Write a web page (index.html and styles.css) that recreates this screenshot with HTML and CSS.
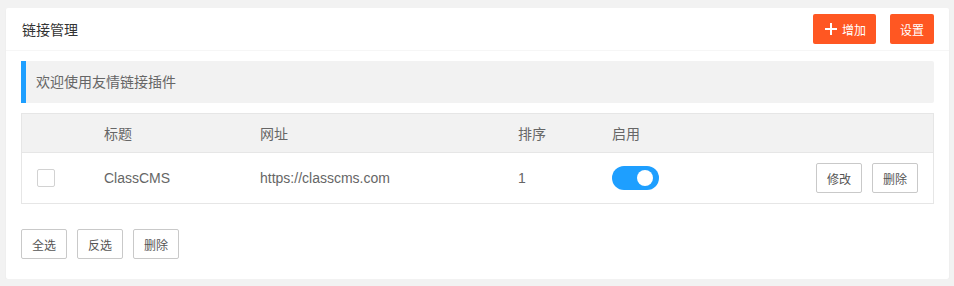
FILE: index.html
```html
<!DOCTYPE html>
<html lang="zh-CN">
<head>
    <meta charset="UTF-8">
    <title>链接管理</title>
    <link rel="stylesheet" href="styles.css">
</head>
<body>

<div class="card">
    <!-- Card header -->
    <div class="card-header">
        <span class="card-title">链接管理</span>
        <div class="header-actions">
            <button class="btn btn-warm">
                <svg class="icon-add" width="12" height="12" viewBox="0 0 12 12"><path d="M6 0v12M0 6h12" stroke="#fff" stroke-width="2"/></svg>增加
            </button>
            <button class="btn btn-warm">设置</button>
        </div>
    </div>

    <div class="card-body">
        <div class="quote">欢迎使用友情链接插件</div>

        <table class="link-table">
            <thead>
                <tr>
                    <th class="col-check"></th>
                    <th class="col-title">标题</th>
                    <th class="col-url">网址</th>
                    <th class="col-sort">排序</th>
                    <th class="col-state">启用</th>
                    <th></th>
                </tr>
            </thead>
            <tbody>
                <tr>
                    <td><span class="checkbox"></span></td>
                    <td>ClassCMS</td>
                    <td>https://classcms.com</td>
                    <td>1</td>
                    <td><span class="switch on"><i></i></span></td>
                    <td class="col-actions">
                        <button class="btn btn-plain">修改</button>
                        <button class="btn btn-plain">删除</button>
                    </td>
                </tr>
            </tbody>
        </table>

        <div class="bulk-actions">
            <button class="btn btn-plain">全选</button>
            <button class="btn btn-plain">反选</button>
            <button class="btn btn-plain">删除</button>
        </div>
    </div>
</div>

</body>
</html>
```

FILE: styles.css
```css
/* General page styling */
body {
    font-family: "Liberation Sans", Arial, "Noto Sans CJK SC", sans-serif;
    font-size: 14px;
    color: #666;
    margin: 0;
    padding: 8px 5px 0 6px;
    background-color: #f2f2f2;
}

.card {
    background-color: #fff;
    border-radius: 2px;
    box-shadow: 0 1px 2px rgba(0, 0, 0, 0.05);
}

.card-header {
    height: 42px;
    border-bottom: 1px solid #f6f6f6;
    padding: 0 15px 0 16px;
    display: flex;
    align-items: center;
    justify-content: space-between;
}

.card-title {
    color: #333;
    font-size: 14px;
}

.header-actions {
    display: flex;
    gap: 14px;
}

.card-body {
    padding: 10px 15px 20px 15px;
}

/* Buttons */
.btn {
    height: 30px;
    padding: 0 10px;
    font-family: inherit;
    font-size: 12px;
    border-radius: 2px;
    cursor: pointer;
    display: inline-flex;
    align-items: center;
}

.btn-warm {
    background-color: #ff5722;
    color: #fff;
    border: none;
}

.icon-add {
    margin: 0 5px 0 2px;
}

.btn-plain {
    background-color: #fff;
    color: #555;
    border: 1px solid #c9c9c9;
}

/* Welcome note */
.quote {
    height: 42px;
    line-height: 42px;
    padding-left: 10px;
    border-left: 5px solid #1e9fff;
    border-radius: 0 2px 2px 0;
    background-color: #f2f2f2;
    color: #666;
}

/* Table */
.link-table {
    width: 100%;
    margin-top: 10px;
    border-collapse: separate;
    border-spacing: 0;
    border: 1px solid #e6e6e6;
    table-layout: fixed;
}

.link-table th {
    height: 38px;
    background-color: #f2f2f2;
    font-weight: normal;
    text-align: left;
    padding: 0 15px;
    border-bottom: 1px solid #e6e6e6;
}

.link-table td {
    height: 50px;
    padding: 0 15px;
}

.col-check { width: 37px; }
.col-title { width: 126px; }
.col-url { width: 228px; }
.col-sort { width: 64px; }
.col-state { width: 80px; }

.col-actions {
    text-align: right;
}

.col-actions .btn {
    margin-left: 6px;
}

.checkbox {
    display: block;
    width: 16px;
    height: 16px;
    border: 1px solid #d2d2d2;
    border-radius: 2px;
}

/* Switch */
.switch {
    position: relative;
    display: block;
    width: 47px;
    height: 24px;
    border-radius: 12px;
    background-color: #d2d2d2;
}

.switch.on {
    background-color: #1e9fff;
}

.switch i {
    position: absolute;
    top: 4px;
    left: 4px;
    width: 16px;
    height: 16px;
    border-radius: 50%;
    background-color: #fff;
}

.switch.on i {
    left: 25px;
}

.bulk-actions {
    margin-top: 25px;
    display: flex;
    gap: 10px;
}
```
